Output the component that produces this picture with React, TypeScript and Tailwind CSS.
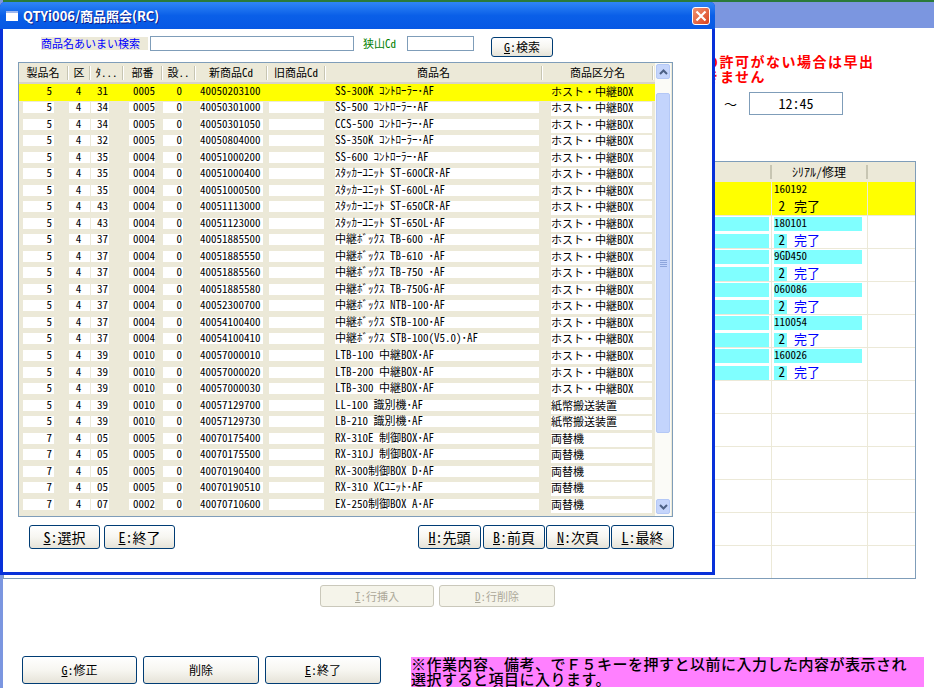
import { ReactNode } from 'react';

const HOST = 'ホスト・中継BOX';
const PAPER = '紙幣搬送装置';
const EXCHANGE = '両替機';

// 製品名, 区, タ.., 部番, 設.., 新商品Cd, 商品名, 商品区分名
const rows: string[][] = [
  ['5', '4', '31', '0005', '0', '40050203100', 'SS-300K ｺﾝﾄﾛｰﾗｰ･AF', HOST],
  ['5', '4', '34', '0005', '0', '40050301000', 'SS-500 ｺﾝﾄﾛｰﾗｰ･AF', HOST],
  ['5', '4', '34', '0005', '0', '40050301050', 'CCS-500 ｺﾝﾄﾛｰﾗｰ･AF', HOST],
  ['5', '4', '32', '0005', '0', '40050804000', 'SS-350K ｺﾝﾄﾛｰﾗｰ･AF', HOST],
  ['5', '4', '35', '0004', '0', '40051000200', 'SS-600 ｺﾝﾄﾛｰﾗｰ･AF', HOST],
  ['5', '4', '35', '0004', '0', '40051000400', 'ｽﾀｯｶｰﾕﾆｯﾄ ST-600CR･AF', HOST],
  ['5', '4', '35', '0004', '0', '40051000500', 'ｽﾀｯｶｰﾕﾆｯﾄ ST-600L･AF', HOST],
  ['5', '4', '43', '0004', '0', '40051113000', 'ｽﾀｯｶｰﾕﾆｯﾄ ST-650CR･AF', HOST],
  ['5', '4', '43', '0004', '0', '40051123000', 'ｽﾀｯｶｰﾕﾆｯﾄ ST-650L･AF', HOST],
  ['5', '4', '37', '0004', '0', '40051885500', '中継ﾎﾞｯｸｽ TB-600 ･AF', HOST],
  ['5', '4', '37', '0004', '0', '40051885550', '中継ﾎﾞｯｸｽ TB-610 ･AF', HOST],
  ['5', '4', '37', '0004', '0', '40051885560', '中継ﾎﾞｯｸｽ TB-750 ･AF', HOST],
  ['5', '4', '37', '0004', '0', '40051885580', '中継ﾎﾞｯｸｽ TB-750G･AF', HOST],
  ['5', '4', '37', '0004', '0', '40052300700', '中継ﾎﾞｯｸｽ NTB-100･AF', HOST],
  ['5', '4', '37', '0004', '0', '40054100400', '中継ﾎﾞｯｸｽ STB-100･AF', HOST],
  ['5', '4', '37', '0004', '0', '40054100410', '中継ﾎﾞｯｸｽ STB-100(V5.0)･AF', HOST],
  ['5', '4', '39', '0010', '0', '40057000010', 'LTB-100 中継BOX･AF', HOST],
  ['5', '4', '39', '0010', '0', '40057000020', 'LTB-200 中継BOX･AF', HOST],
  ['5', '4', '39', '0010', '0', '40057000030', 'LTB-300 中継BOX･AF', HOST],
  ['5', '4', '39', '0010', '0', '40057129700', 'LL-100 識別機･AF', PAPER],
  ['5', '4', '39', '0010', '0', '40057129730', 'LB-210 識別機･AF', PAPER],
  ['7', '4', '05', '0005', '0', '40070175400', 'RX-310E 制御BOX･AF', EXCHANGE],
  ['7', '4', '05', '0005', '0', '40070175500', 'RX-310J 制御BOX･AF', EXCHANGE],
  ['7', '4', '05', '0005', '0', '40070190400', 'RX-300制御BOX D･AF', EXCHANGE],
  ['7', '4', '05', '0005', '0', '40070190510', 'RX-310 XCﾕﾆｯﾄ･AF', EXCHANGE],
  ['7', '4', '07', '0002', '0', '40070710600', 'EX-250制御BOX A･AF', EXCHANGE],
];

const serials = ['180101', '9GD450', '060086', '110054', '160026'];

function XpButton({ hotkey, label, className, disabled }: { hotkey?: string; label: string; className: string; disabled?: boolean }) {
  return (
    <button
      disabled={disabled}
      className={`flex items-center justify-center shrink-0 rounded-[3px] border ${
        disabled
          ? 'border-[#cac8bb] bg-[#f5f4ea] text-[#aca899]'
          : 'border-[#003c74] bg-gradient-to-b from-white via-[#f7f6f1] to-[#e6e3d8] text-black'
      } ${className}`}
    >
      {hotkey && <span className="underline">{hotkey}</span>}
      {hotkey && ':'}
      {label}
    </button>
  );
}

function HeaderCell({ w, children }: { w: string; children: ReactNode }) {
  return (
    <div className={`flex items-center shrink-0 h-full ${w}`}>
      <span className="flex-1 text-center whitespace-nowrap">{children}</span>
      <div className="w-[2px] h-[14px] border-l border-[#c7c5b2] bg-white" />
    </div>
  );
}

function ProductRow({ row, selected }: { row: string[]; selected: boolean }) {
  const cell = `h-[11px] shrink-0 leading-[9px] whitespace-nowrap ${selected ? '' : 'bg-white'}`;
  return (
    <div className={`flex items-start h-[16.54px] pt-[1.5px] w-[636px] ${selected ? 'bg-[#ffff00]' : ''}`}>
      <div className={`${cell} ml-[4px] w-[31px] pr-[2px] text-right`}>{row[0]}</div>
      <div className={`${cell} ml-[15px] w-[21px] pr-[2px] text-center`}>{row[1]}</div>
      <div className={`${cell} ml-[1px] w-[18px] pr-[1px] text-right`}>{row[2]}</div>
      <div className={`${cell} ml-[20px] w-[26px] text-right`}>{row[3]}</div>
      <div className={`${cell} ml-[8px] w-[20px] pr-[1px] text-right`}>{row[4]}</div>
      <div className={`${cell} ml-[17px] w-[63px]`}>{row[5]}</div>
      <div className={`${cell} ml-[6px] w-[55px]`} />
      <div className={`${cell} ml-[11px] w-[204px]`}>{row[6]}</div>
      <div className={`${cell} !h-[14px] ml-[12px] w-[101px] !leading-[10px]`}>{row[7]}</div>
    </div>
  );
}

function ScrollArrow({ up }: { up?: boolean }) {
  return (
    <div className="flex items-center justify-center w-[14px] h-[15px] rounded-[2px] border border-[#b4c8f6] bg-[#c5d5fb] shrink-0">
      <svg width="9" height="6" viewBox="0 0 9 6" className={up ? '' : 'rotate-180'}>
        <path d="M1 5 L4.5 1.5 L8 5" fill="none" stroke="#4d6185" strokeWidth="2" />
      </svg>
    </div>
  );
}

function ScrollBar() {
  return (
    <div className="flex flex-col w-[16px] pl-[1px] h-full bg-[#fbfbf7] pt-[1px]">
      <ScrollArrow up />
      <div className="mt-[14px] h-[340px] w-[14px] rounded-[2px] border border-[#b4c8f6] bg-[#c3d4fc] flex flex-col items-center justify-center gap-[1px] shrink-0">
        <div className="w-[7px] h-[1px] bg-[#8ea6dc]" />
        <div className="w-[7px] h-[1px] bg-[#8ea6dc]" />
        <div className="w-[7px] h-[1px] bg-[#8ea6dc]" />
        <div className="w-[7px] h-[1px] bg-[#8ea6dc]" />
      </div>
      <div className="flex-1" />
      <ScrollArrow />
      <div className="h-[2px] shrink-0" />
    </div>
  );
}

function ProductDialog() {
  return (
    <div className="absolute left-0 top-[2px] w-[715px] h-[573px] flex flex-col rounded-t-[5px] overflow-hidden bg-[#0831d9]">
      {/* title bar */}
      <div className="flex items-center h-[27px] shrink-0 pl-[6px] pr-[5px] bg-gradient-to-b from-[#2f86f6] via-[#0a5fe8] to-[#0758e4]">
        <div className="w-[12px] h-[10px] bg-white border-t-2 border-[#9db7ee]" />
        <span className="ml-[5px] text-[13px] font-bold text-white [font-feature-settings:normal] [text-shadow:1px_1px_0_#0f1e8a]">QTYi006/商品照会(RC)</span>
        <div className="ml-auto flex items-center justify-center w-[18px] h-[18px] rounded-[3px] border border-white bg-gradient-to-br from-[#f0916f] to-[#d8401a]">
          <svg width="12" height="12" viewBox="0 0 12 12">
            <path d="M1.5 1.5 L10.5 10.5 M10.5 1.5 L1.5 10.5" stroke="white" strokeWidth="2.2" />
          </svg>
        </div>
      </div>

      {/* body */}
      <div className="flex-1 mx-[3px] mb-[3px] bg-white flex flex-col">
        <div className="flex items-start h-[21px] mt-[7px] shrink-0">
          <div className="ml-[38px] mt-[1px] w-[107px] h-[13px] leading-[13px] bg-[#ece9d8] text-[#0000ff]">商品名あいまい検索</div>
          <div className="ml-[2px] w-[204px] h-[15px] border border-[#7f9db9] bg-white" />
          <div className="ml-[9px] w-[44px] leading-[15px] text-[#008000]">狭山Cd</div>
          <div className="w-[67px] h-[15px] border border-[#7f9db9] bg-white" />
          <XpButton hotkey="G" label="検索" className="ml-[17px] mt-[1px] w-[62px] h-[20px] text-[12px]" />
        </div>

        <div className="flex ml-[15px] mt-[5px] w-[655px] h-[455px] border border-[#7f9db9] bg-[#ece9d8] shrink-0">
          <div className="w-[636px] flex flex-col shrink-0">
            <div className="flex items-center h-[21px] shrink-0 border-b-2 border-[#d8d4c5]">
              <HeaderCell w="w-[50px]">製品名</HeaderCell>
              <HeaderCell w="w-[22px]">区</HeaderCell>
              <HeaderCell w="w-[33px]">ﾀ...</HeaderCell>
              <HeaderCell w="w-[39px]">部番</HeaderCell>
              <HeaderCell w="w-[33px]">設..</HeaderCell>
              <HeaderCell w="w-[72px]">新商品Cd</HeaderCell>
              <HeaderCell w="w-[58px]">旧商品Cd</HeaderCell>
              <HeaderCell w="w-[217px]">商品名</HeaderCell>
              <HeaderCell w="w-[111px]">商品区分名</HeaderCell>
            </div>
            {rows.map((row, i) => (
              <ProductRow key={row[5]} row={row} selected={i === 0} />
            ))}
          </div>
          <ScrollBar />
        </div>

        <div className="flex h-[24px] mt-[8px] ml-[26px] text-[14px] shrink-0">
          <XpButton hotkey="S" label="選択" className="w-[71px]" />
          <XpButton hotkey="E" label="終了" className="ml-[4px] w-[71px]" />
          <XpButton hotkey="H" label="先頭" className="ml-[243px] w-[63px]" />
          <XpButton hotkey="B" label="前頁" className="ml-[2px] w-[62px]" />
          <XpButton hotkey="N" label="次頁" className="ml-[1px] w-[64px]" />
          <XpButton hotkey="L" label="最終" className="ml-[1px] w-[63px]" />
        </div>
      </div>
    </div>
  );
}

function WorkRow({ serial, tone }: { serial?: string; tone: 'yellow' | 'cyan' | 'empty' }) {
  const yellow = tone === 'yellow';
  return (
    <div className={`flex shrink-0 border-b border-[#ece9d8] ${yellow ? 'h-[34px] bg-[#ffff00]' : 'h-[33px]'}`}>
      <div className="w-[768px] shrink-0 border-r border-[#ece9d8] pr-[2px] pt-[1px]">
        {tone === 'cyan' && (
          <>
            <div className="h-[14px] bg-[#80ffff]" />
            <div className="h-[14px] mt-[3px] bg-[#80ffff]" />
          </>
        )}
      </div>
      <div className="w-[96px] shrink-0 border-r border-[#ece9d8] pl-[2px] pt-[1px] text-[11px]">
        {serial && (
          <>
            <div className={`h-[14px] w-[88px] leading-[11px] ${yellow ? '' : 'bg-[#80ffff]'}`}>{serial}</div>
            <div className="flex h-[14px] mt-[3px] text-[13px] leading-[12px]">
              <span className={`w-[13px] text-right pr-[2px] ${yellow ? '' : 'bg-[#80ffff]'}`}>2</span>
              <span className={`ml-[7px] ${yellow ? 'text-black' : 'text-[#0000ff]'}`}>完了</span>
            </div>
          </>
        )}
      </div>
      <div className="flex-1" />
    </div>
  );
}

export default function App() {
  return (
    <div className="relative w-[947px] h-[688px] overflow-hidden bg-white text-[11px] text-black font-['Noto_Sans_CJK_JP','Liberation_Sans',sans-serif] [font-feature-settings:'hwid']">
      {/* window behind the dialog */}
      <div className="w-[934px] h-[688px] flex flex-col border-l-[3px] border-[#7b96e0]">
        <div className="h-[2px] bg-[#2a7a3a] shrink-0" />
        <div className="h-[26px] bg-[#7b96e0] shrink-0" />

        <div className="ml-[686px] mt-[26px] text-[14px] leading-[15px] font-bold text-[#ff0000] tracking-[1.5px] whitespace-nowrap">
          <div className="ml-[15px]">の許可がない場合は早出</div>
          <div>できません</div>
        </div>

        <div className="flex items-center ml-[721px] mt-[8px] h-[23px]">
          <span className="text-[13px] w-[25px] [font-feature-settings:normal]">〜</span>
          <div className="flex items-center justify-center w-[94px] h-[23px] border border-[#7f9db9] text-[14px]">12:45</div>
        </div>

        <div className="mt-[46px] w-[913px] h-[418px] border border-[#7f9db9] shrink-0 overflow-hidden">
          <div className="flex items-center h-[20px] bg-[#ece9d8] text-[12px]">
            <div className="w-[768px] h-[14px] shrink-0 border-r-2 border-[#c7c5b2]" />
            <div className="w-[96px] h-[14px] shrink-0 border-r-2 border-[#c7c5b2] leading-[14px] text-center">ｼﾘｱﾙ/修理</div>
          </div>
          <WorkRow serial="160192" tone="yellow" />
          {serials.map((s) => (
            <WorkRow key={s} serial={s} tone="cyan" />
          ))}
          {[0, 1, 2, 3, 4, 5].map((n) => (
            <WorkRow key={n} tone="empty" />
          ))}
        </div>

        <div className="flex h-[22px] mt-[6px] ml-[317px] gap-[5px] text-[11px] shrink-0">
          <XpButton disabled hotkey="I" label="行挿入" className="w-[114px]" />
          <XpButton disabled hotkey="D" label="行削除" className="w-[116px]" />
        </div>

        <div className="flex items-start mt-[49px] ml-[19px] text-[12px]">
          <XpButton hotkey="G" label="修正" className="w-[115px] h-[28px]" />
          <XpButton label="削除" className="ml-[6px] w-[116px] h-[28px]" />
          <XpButton hotkey="E" label="終了" className="ml-[6px] w-[116px] h-[28px]" />
          <div className="ml-[30px] mt-[1px] w-[513px] h-[30px] bg-[#ff80ff] text-[15px] leading-[14.5px] tracking-[0.5px] font-medium whitespace-nowrap [font-feature-settings:normal]">
            <div>※作業内容、備考、でＦ５キーを押すと以前に入力した内容が表示され</div>
            <div>選択すると項目に入ります。</div>
          </div>
        </div>
      </div>

      <ProductDialog />
    </div>
  );
}
